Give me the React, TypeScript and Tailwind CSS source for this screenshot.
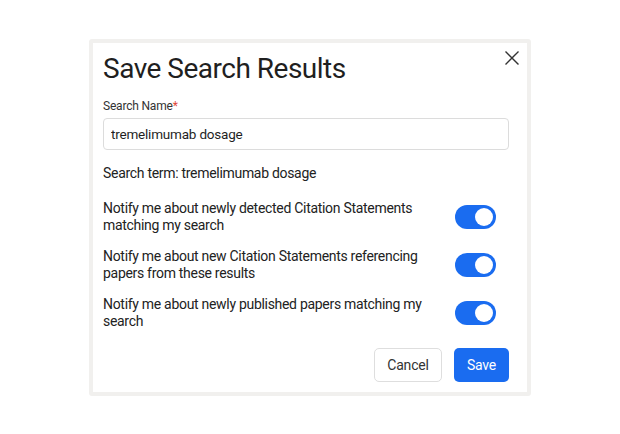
import React, { useState } from 'react';

const rows = [
  'Notify me about newly detected Citation Statements matching my search',
  'Notify me about new Citation Statements referencing papers from these results',
  'Notify me about newly published papers matching my search',
];

const Toggle: React.FC<{ on: boolean; onClick: () => void }> = ({ on, onClick }) => (
  <button
    onClick={onClick}
    className={`relative w-[41px] h-[24px] rounded-full shrink-0 ${on ? 'bg-[#1a6cf0]' : 'bg-gray-300'}`}
  >
    <span
      className={`absolute top-[3px] w-[18px] h-[18px] rounded-full bg-white ${on ? 'left-[20px]' : 'left-[3px]'}`}
    />
  </button>
);

export default function App() {
  const [name, setName] = useState('tremelimumab dosage');
  const [toggles, setToggles] = useState([true, true, true]);

  return (
    <div className="w-[620px] h-[434px] bg-white flex items-start justify-center pt-[39px] font-['Roboto',sans-serif] text-[#1f1f1f]">
      <div className="w-[442px] border-4 border-[#f1f0ee] rounded-[3px] bg-white">
        <div className="relative pl-[10px] pr-[18px] pt-[8px] pb-[10px]">
          {/* close */}
          <button className="absolute top-[6px] right-[6px] text-[#333]">
            <svg width="18" height="18" viewBox="0 0 18 18" fill="none" stroke="currentColor" strokeWidth="1.4">
              <path d="M2.5 2.5l13 13M15.5 2.5l-13 13" />
            </svg>
          </button>

          <h1 className="text-[28px] leading-[36px] font-normal tracking-[-0.5px]">Save Search Results</h1>

          <label className="block mt-[11px] text-[12px] leading-[16px] text-[#333] tracking-[-0.2px]">
            Search Name<span className="text-[#e0483a]">*</span>
          </label>
          <input
            value={name}
            onChange={e => setName(e.target.value)}
            className="mt-[4px] w-full h-[32px] px-[7px] border border-[#dcdcdc] rounded-[4px] text-[13.5px] tracking-[-0.2px] outline-none"
          />

          <p className="mt-[14px] text-[14px] leading-[18px] tracking-[-0.3px] text-[#222]">
            Search term: tremelimumab dosage
          </p>

          <div className="mt-[18px] flex flex-col gap-[14px]">
            {rows.map((r, i) => (
              <div key={i} className="flex items-center justify-between pr-[13px]">
                <p className="w-[330px] text-[14px] leading-[17px] tracking-[-0.3px] text-[#222]">{r}</p>
                <Toggle
                  on={toggles[i]}
                  onClick={() => setToggles(t => t.map((v, j) => (j === i ? !v : v)))}
                />
              </div>
            ))}
          </div>

          <div className="mt-[18px] flex justify-end gap-[12px]">
            <button className="h-[34px] w-[68px] border border-[#dedede] rounded-[5px] text-[14px] tracking-[-0.2px] text-[#333] bg-white">
              Cancel
            </button>
            <button className="h-[34px] w-[55px] rounded-[5px] text-[14px] tracking-[-0.2px] text-white bg-[#1a6cf0]">
              Save
            </button>
          </div>
        </div>
      </div>
    </div>
  );
}
